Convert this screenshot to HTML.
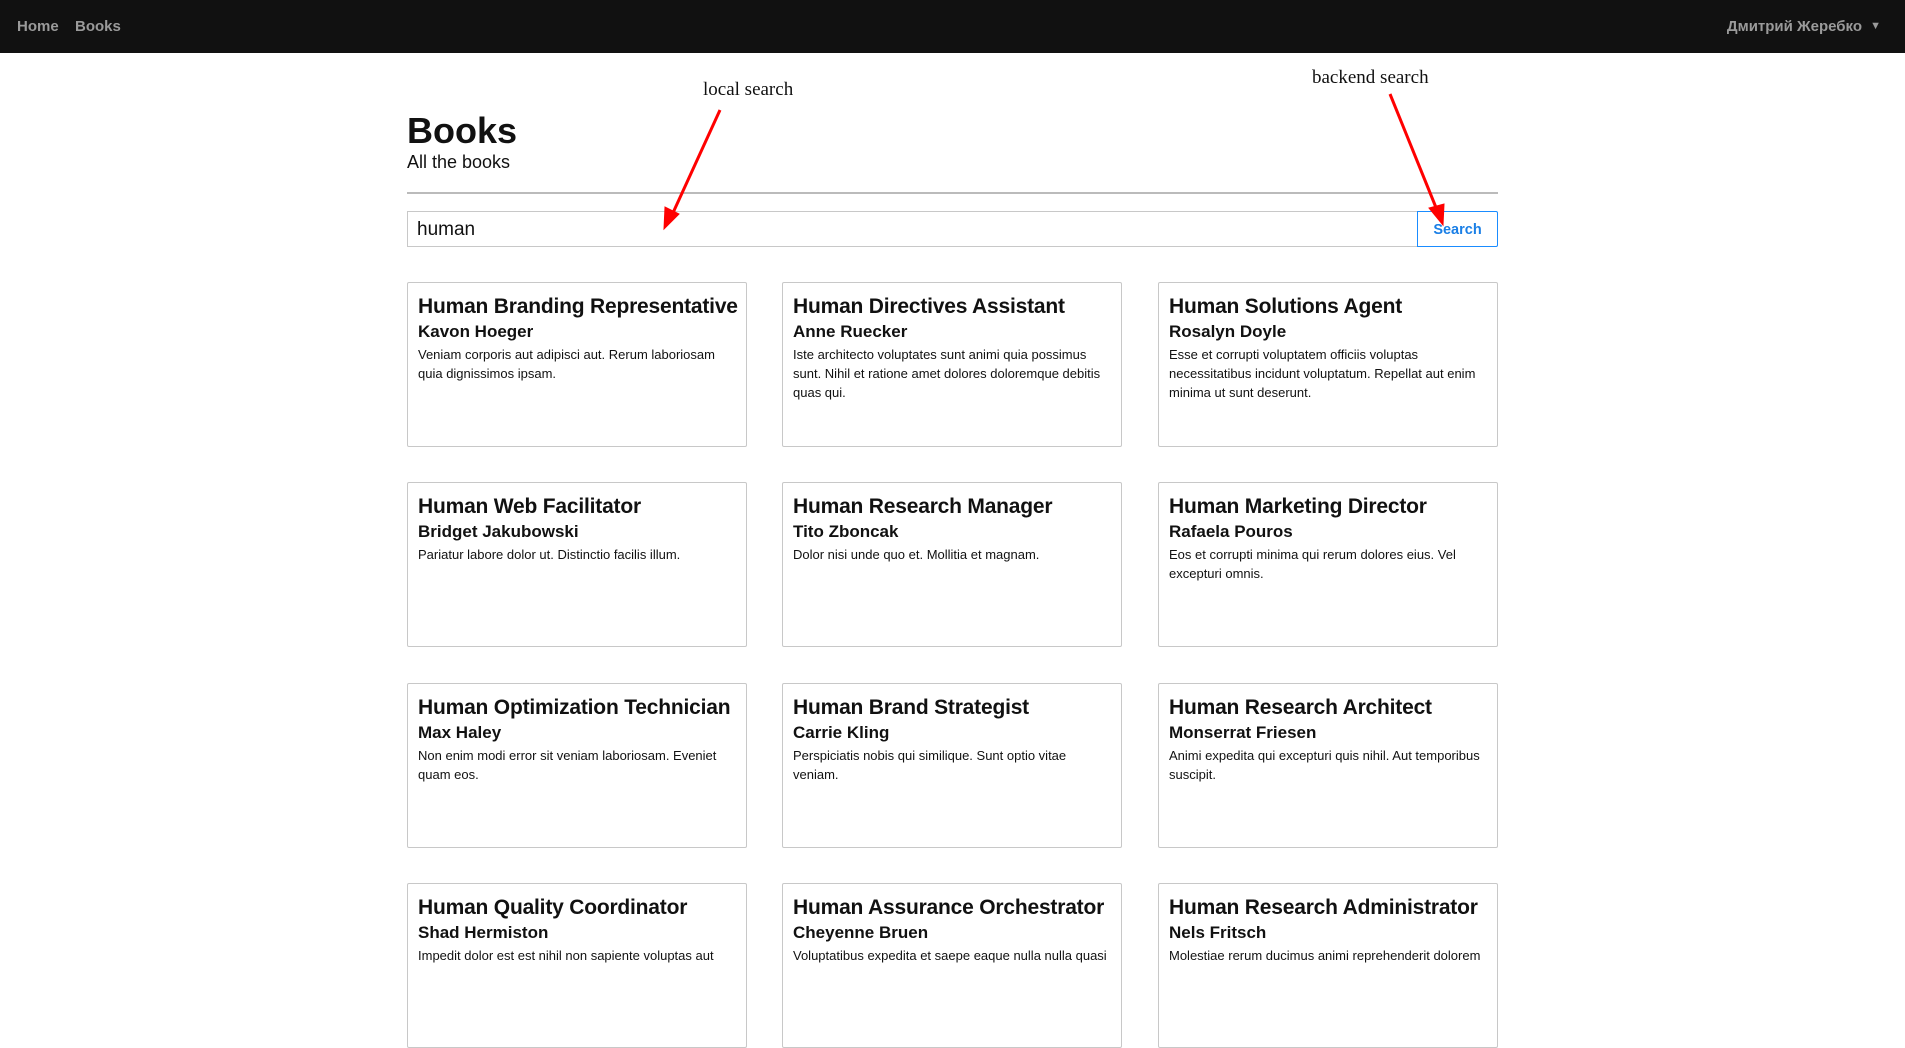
<!DOCTYPE html>
<html><head><meta charset="utf-8"><style>
*{box-sizing:border-box;margin:0;padding:0}
body{width:1905px;height:969px;overflow:hidden;background:#fff;font-family:"Liberation Sans","Noto Sans CJK SC",sans-serif;color:#111;position:relative}
.nav{position:absolute;left:0;top:0;width:1905px;height:53px;background:#111}
.nav span{position:absolute;top:18px;font-size:15px;font-weight:bold;color:#9a9a9a}
.abs{position:absolute}
.card{position:absolute;width:340px;height:165px;border:1px solid #c8c8c8;border-radius:2px;padding:10px 10px}
.card h3{font-size:21px;font-weight:bold;line-height:28px;white-space:nowrap;letter-spacing:-0.2px}
.card h4{font-size:17px;font-weight:bold;line-height:22px}
.card p{font-size:13px;line-height:19px;margin-top:2px}
.ann{position:absolute;font-family:"Liberation Serif",serif;font-size:19px;color:#111}
</style></head><body>
<div class="nav">
<span style="left:17px">Home</span><span style="left:75px">Books</span>
<span style="right:43px">Дмитрий Жеребко</span>
<span style="right:24px;font-size:11px;top:20px">▼</span>
</div>
<div class="abs" style="left:407px;top:110px;font-size:36px;font-weight:bold">Books</div>
<div class="abs" style="left:407px;top:152px;font-size:18px">All the books</div>
<div class="abs" style="left:407px;top:192px;width:1091px;height:2px;background:#bbb"></div>
<div class="abs" style="left:407px;top:211px;width:1011px;height:36px;border:1px solid #c8c8c8;border-right:none;font-size:19px;padding:7px 9px">human</div>
<div class="abs" style="left:1417px;top:211px;width:81px;height:36px;border:1px solid #1a8cff;border-radius:0 2px 2px 0;color:#1a7fe6;font-size:14.5px;font-weight:bold;text-align:center;line-height:36px">Search</div>

<div class="card" style="left:407px;top:282px"><h3>Human Branding Representative</h3><h4>Kavon Hoeger</h4><p>Veniam corporis aut adipisci aut. Rerum laboriosam quia dignissimos ipsam.</p></div>
<div class="card" style="left:782px;top:282px"><h3>Human Directives Assistant</h3><h4>Anne Ruecker</h4><p>Iste architecto voluptates sunt animi quia possimus sunt. Nihil et ratione amet dolores doloremque debitis quas qui.</p></div>
<div class="card" style="left:1158px;top:282px"><h3>Human Solutions Agent</h3><h4>Rosalyn Doyle</h4><p>Esse et corrupti voluptatem officiis voluptas necessitatibus incidunt voluptatum. Repellat aut enim minima ut sunt deserunt.</p></div>

<div class="card" style="left:407px;top:482px"><h3>Human Web Facilitator</h3><h4>Bridget Jakubowski</h4><p>Pariatur labore dolor ut. Distinctio facilis illum.</p></div>
<div class="card" style="left:782px;top:482px"><h3>Human Research Manager</h3><h4>Tito Zboncak</h4><p>Dolor nisi unde quo et. Mollitia et magnam.</p></div>
<div class="card" style="left:1158px;top:482px"><h3>Human Marketing Director</h3><h4>Rafaela Pouros</h4><p>Eos et corrupti minima qui rerum dolores eius. Vel excepturi omnis.</p></div>

<div class="card" style="left:407px;top:683px"><h3>Human Optimization Technician</h3><h4>Max Haley</h4><p>Non enim modi error sit veniam laboriosam. Eveniet quam eos.</p></div>
<div class="card" style="left:782px;top:683px"><h3>Human Brand Strategist</h3><h4>Carrie Kling</h4><p>Perspiciatis nobis qui similique. Sunt optio vitae veniam.</p></div>
<div class="card" style="left:1158px;top:683px"><h3>Human Research Architect</h3><h4>Monserrat Friesen</h4><p>Animi expedita qui excepturi quis nihil. Aut temporibus suscipit.</p></div>

<div class="card" style="left:407px;top:883px"><h3>Human Quality Coordinator</h3><h4>Shad Hermiston</h4><p>Impedit dolor est est nihil non sapiente voluptas aut</p></div>
<div class="card" style="left:782px;top:883px"><h3>Human Assurance Orchestrator</h3><h4>Cheyenne Bruen</h4><p>Voluptatibus expedita et saepe eaque nulla nulla quasi</p></div>
<div class="card" style="left:1158px;top:883px"><h3>Human Research Administrator</h3><h4>Nels Fritsch</h4><p>Molestiae rerum ducimus animi reprehenderit dolorem</p></div>

<div class="ann" style="left:703px;top:79px">local search</div>
<div class="ann" style="left:1312px;top:67px">backend search</div>
<svg class="abs" style="left:0;top:0" width="1905" height="969">
<g stroke="#f00" stroke-width="3" fill="#f00">
<line x1="720" y1="110" x2="672" y2="215"/>
<polygon points="664,229 665,207 679,214" stroke-width="1"/>
<line x1="1390" y1="94" x2="1437" y2="210"/>
<polygon points="1443,225 1429,208 1444,204" stroke-width="1"/>
</g></svg>
</body></html>
